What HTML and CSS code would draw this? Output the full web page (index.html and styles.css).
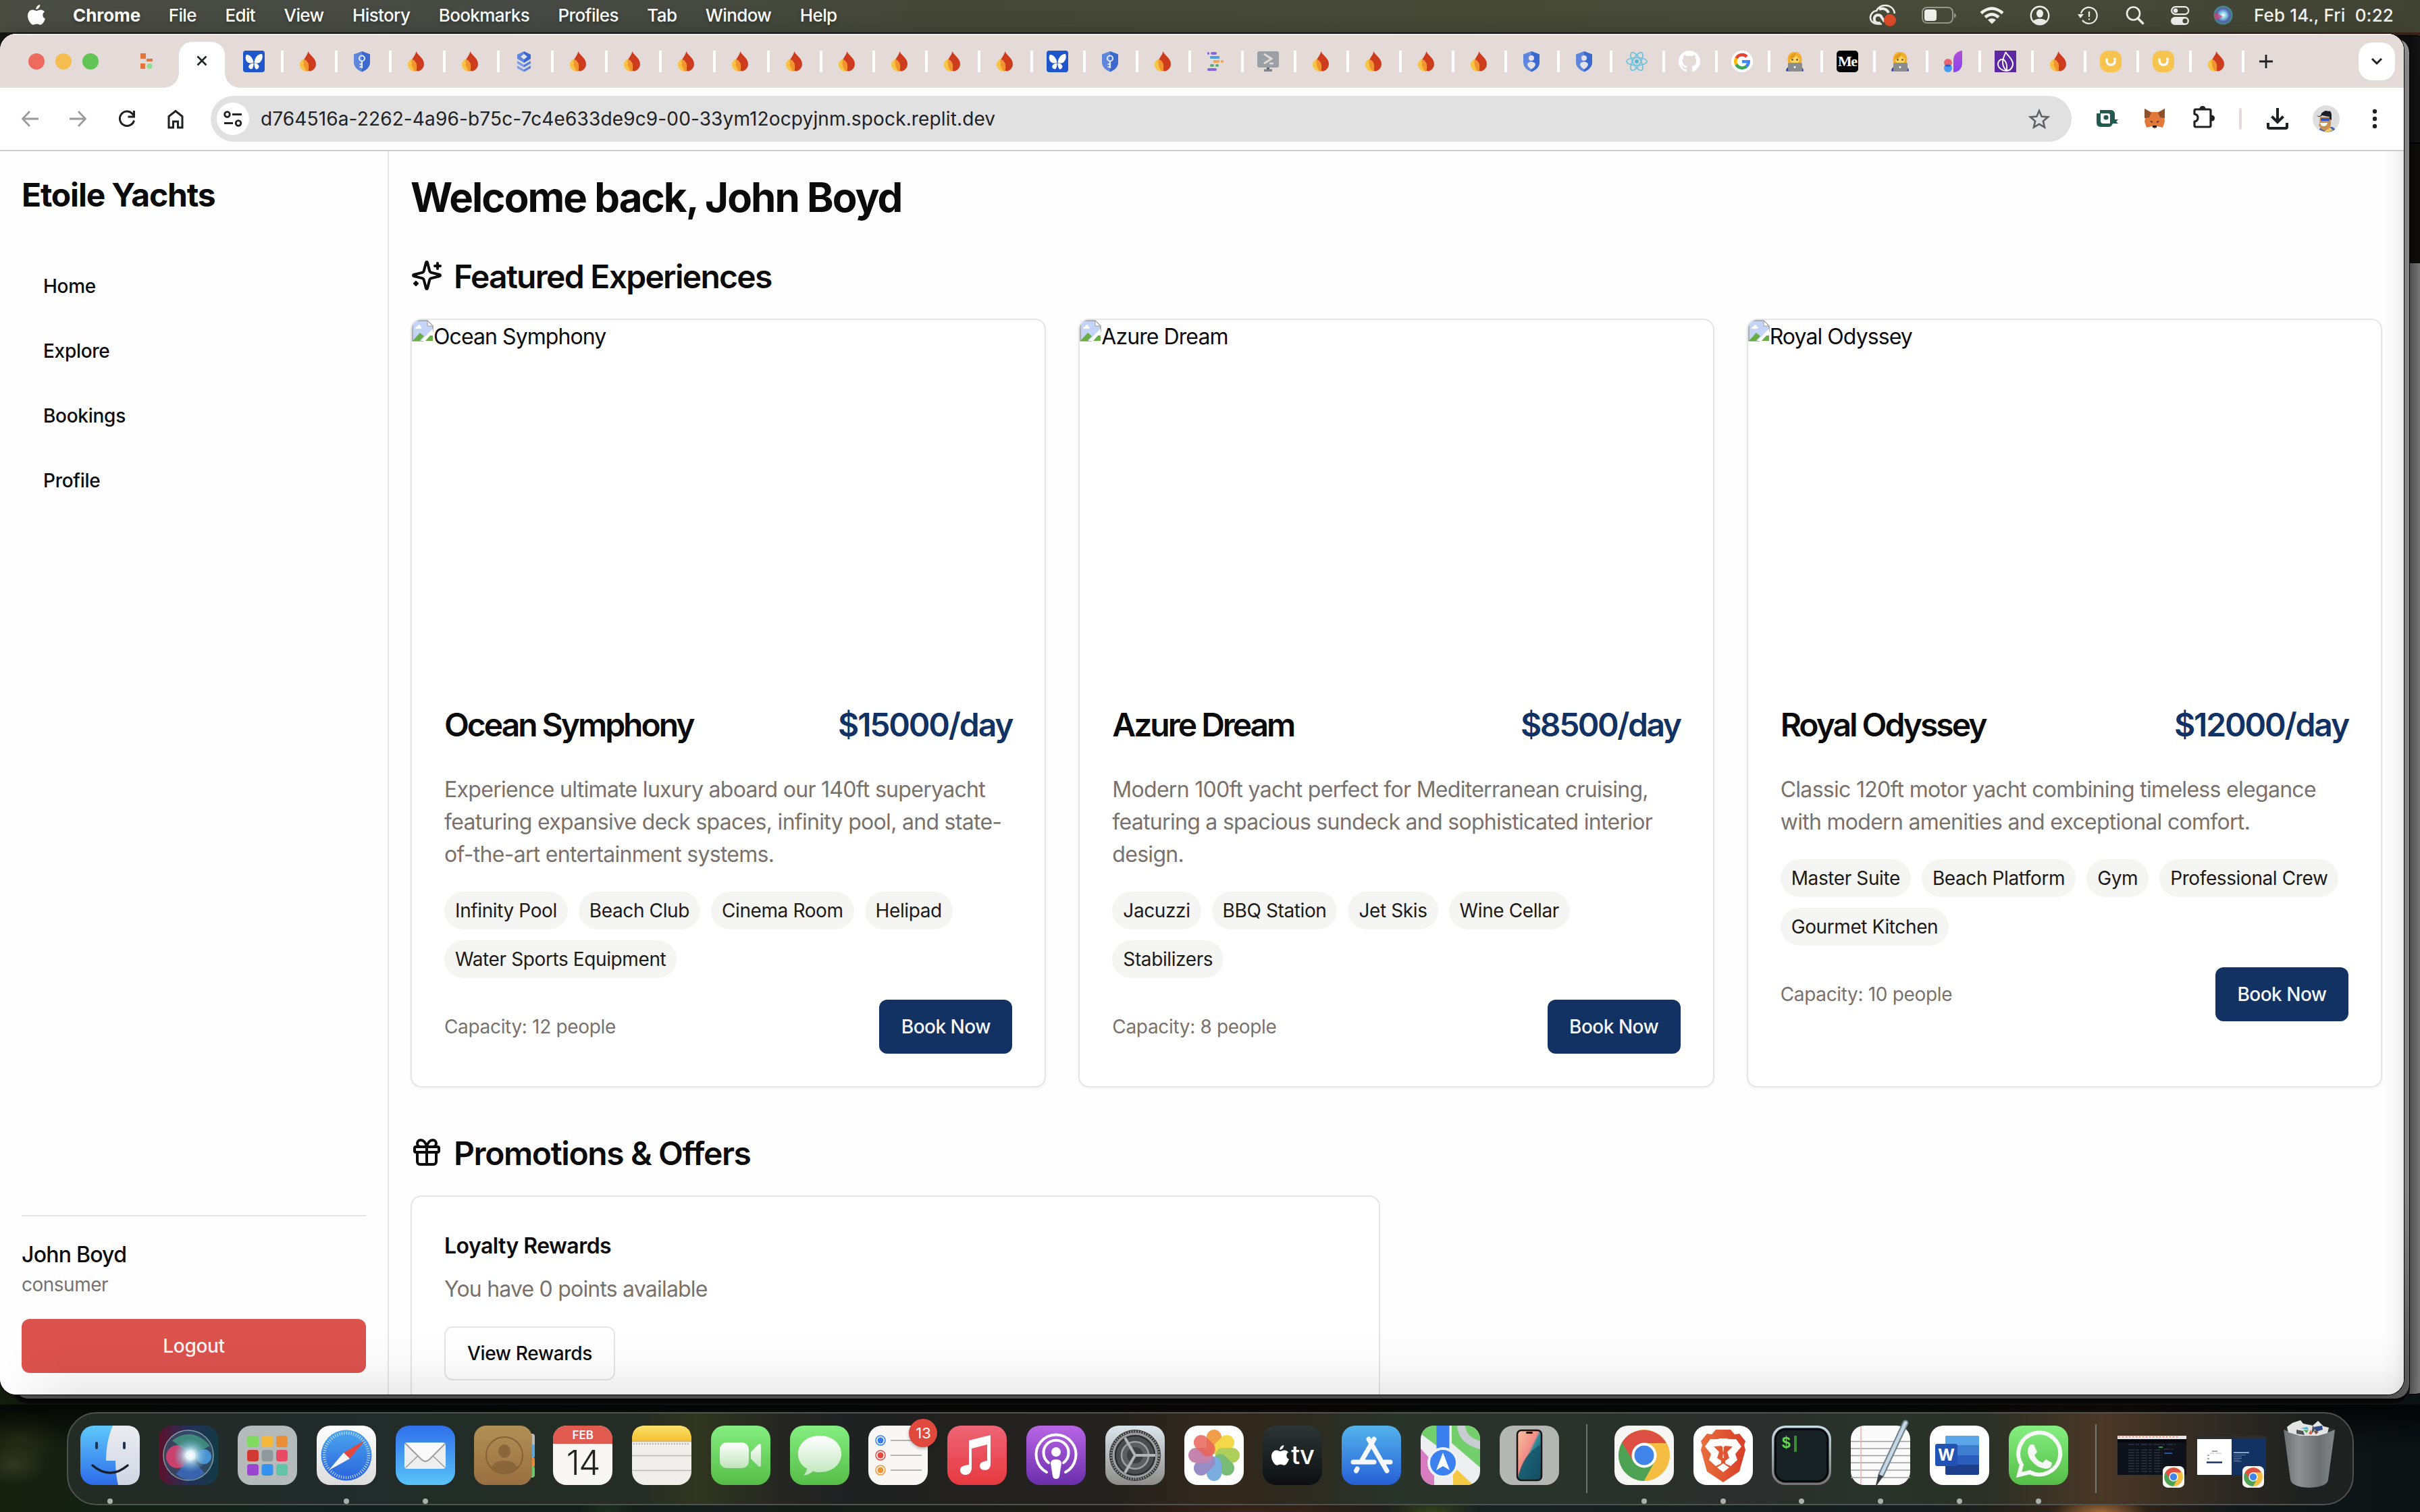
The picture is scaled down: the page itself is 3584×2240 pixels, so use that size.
FILE: index.html
```html
<!DOCTYPE html>
<html lang="en">
<head>
<meta charset="utf-8">
<title>Etoile Yachts</title>
<link rel="stylesheet" href="styles.css">
</head>
<body>
<svg class="defs" width="0" height="0">
  <defs>
    <linearGradient id="gFinder" x2="0" y2="1"><stop stop-color="#5ec8fa"/><stop offset="1" stop-color="#2c6bea"/></linearGradient>
    <linearGradient id="gFinder2" x2="0" y2="1"><stop stop-color="#ececf0"/><stop offset="1" stop-color="#cfd6e4"/></linearGradient>
    <radialGradient id="gSiri"><stop stop-color="#fff"/><stop offset=".25" stop-color="#e4f6fa"/><stop offset=".6" stop-color="#8fc4dc" stop-opacity=".6"/><stop offset="1" stop-color="#6fa8c8" stop-opacity="0"/></radialGradient>
    <linearGradient id="gSiriBg"><stop stop-color="#5d1029"/><stop offset=".5" stop-color="#24305c"/><stop offset="1" stop-color="#123a44"/></linearGradient>
    <linearGradient id="gWhite" x2="0" y2="1"><stop stop-color="#fff"/><stop offset="1" stop-color="#dcdcdc"/></linearGradient>
    <linearGradient id="gBlue" x2="0" y2="1"><stop stop-color="#4aa6ee"/><stop offset="1" stop-color="#2a63dc"/></linearGradient>
    <linearGradient id="gMail" x2="0" y2="1"><stop stop-color="#2f6fec"/><stop offset="1" stop-color="#59c4f8"/></linearGradient>
    <linearGradient id="gBrown" x2="0" y2="1"><stop stop-color="#b09055"/><stop offset="1" stop-color="#996f41"/></linearGradient>
    <linearGradient id="gYellow" x2="0" y2="1"><stop stop-color="#fbe06a"/><stop offset="1" stop-color="#f5c02f"/></linearGradient>
    <linearGradient id="gGreen" x2="0" y2="1"><stop stop-color="#84ef80"/><stop offset="1" stop-color="#56bd47"/></linearGradient>
    <linearGradient id="gCam" x2="0" y2="1"><stop stop-color="#fff"/><stop offset="1" stop-color="#bfe6bb"/></linearGradient>
    <linearGradient id="gRed" x2="0" y2="1"><stop stop-color="#ee6575"/><stop offset="1" stop-color="#e63940"/></linearGradient>
    <linearGradient id="gPurple" x2="0" y2="1"><stop stop-color="#b865e6"/><stop offset="1" stop-color="#6a2eab"/></linearGradient>
    <linearGradient id="gSet" x2="0" y2="1"><stop stop-color="#dbe6ec"/><stop offset="1" stop-color="#8d8c89"/></linearGradient>
    <linearGradient id="gStore" x2="0" y2="1"><stop stop-color="#53b4ec"/><stop offset="1" stop-color="#265fd6"/></linearGradient>
    <linearGradient id="gPhone" x2="1" y2="1"><stop stop-color="#f7c49c"/><stop offset=".45" stop-color="#f08a86"/><stop offset=".5" stop-color="#2f8c9c"/><stop offset="1" stop-color="#14364f"/></linearGradient>
    <linearGradient id="gBrave"><stop stop-color="#e8703d"/><stop offset="1" stop-color="#d83d28"/></linearGradient>
    <linearGradient id="gTerm" x2="0" y2="1"><stop stop-color="#c7dbe4"/><stop offset="1" stop-color="#74716f"/></linearGradient>
    <linearGradient id="gTrash"><stop stop-color="#6c7072"/><stop offset=".3" stop-color="#8e9193"/><stop offset=".7" stop-color="#6c6f71"/><stop offset="1" stop-color="#85888a"/></linearGradient>
    <linearGradient id="gPurple2" x2="0" y2="1"><stop stop-color="#b050d0"/><stop offset="1" stop-color="#8a43f6"/></linearGradient>
    <radialGradient id="gOrb"><stop stop-color="#fff"/><stop offset=".35" stop-color="#7fd0e6"/><stop offset=".7" stop-color="#5a5fb0"/><stop offset="1" stop-color="#3b9a80"/></radialGradient>
  </defs>
  <symbol id="flame" viewBox="0 0 32 32"><path fill="#cc3c1d" d="M16.4 1c1.2 4.5 11.6 10.400 11.600 18.500C28 25.500 24 30 18 30.500c-5-2-8.500-7-8.500-13C9.500 11 15.500 7.500 16.400 1z"/><path fill="#f7c445" d="M9 13C4.500 15 4 19 4 21c0 5.500 5 10.500 12 10 1-3 1.500-6 1-9-.5-5-4-9-8-9z"/><path fill="#f1932f" d="M9.700 13.200c3.800.8 6.800 4.300 7.300 8.800.3 3 0 6-1 8.700C12 29 9 23 9.700 13.200z"/></symbol>
  <symbol id="key" viewBox="0 0 32 32"><path fill="#5e86dc" d="M16 1 28 5.500V17c0 7-5 11.500-12 14.500C9 28.500 4 24 4 17V5.500z"/><path fill="#3b69cf" d="M16 1 28 5.500V17c0 7-5 11.500-12 14.500z"/><g fill="none" stroke="#dfe6f5" stroke-width="2.200"><circle cx="16" cy="11.500" r="4"/><path d="M16 15.500V26M16 20h-3.500M16 24h-3.500"/></g></symbol>
  <symbol id="person" viewBox="0 0 32 32"><path fill="#5e86dc" d="M16 1 28 5.500V17c0 7-5 11.500-12 14.500C9 28.500 4 24 4 17V5.500z"/><path fill="#3b69cf" d="M16 1 28 5.500V17c0 7-5 11.500-12 14.500z"/><circle cx="16" cy="11" r="4" fill="#e6e1e6"/><path fill="#e6e1e6" d="M10 21c0-6 12-6 12 0-1 3-3 5-6 6.500-3-1.500-5-3.500-6-6.500z"/></symbol>
  <symbol id="butterfly" viewBox="0 0 32 32"><rect width="32" height="32" rx="4" fill="#1f56cc"/><g fill="#fff"><path d="M15.500 17.500C14.500 11 10 5.500 5 6c-2.500 3-1.500 11.500 4.500 12.500 2.500.3 4.500 0 6-1z"/><path d="M16.500 17.500C17.500 10 22 4.500 28 5c2 4 0 12-5.500 13.500-2.500.4-4.500 0-6-1z"/><path d="M15.500 18.500c-4 .5-6.500 2-7.500 5 .5 3 3 4.500 5.500 3.500 1.500-2 2.200-5 2-8.500zM16.500 18.500c4 0 6 2 7 4.500 0 3-2 5-4.500 4.500-1.700-2-2.500-5-2.500-9z"/></g></symbol>
  <symbol id="layers" viewBox="0 0 32 32"><path fill="#5e86dc" d="M16 1 26 6v6l-10 6-10-6V6z"/><path fill="#3b69cf" d="M16 1 26 6v6l-10 6z"/><path fill="#e4e4ee" d="m16 5 5 4-5 4-5-4z"/><path fill="#7b9ce4" d="m6 15 10 6v4L6 19zM6 22l10 6v3.500L6 26z"/><path fill="#5580d9" d="m26 15-10 6v4l10-6zM26 22l-10 6v3.500L26 26z"/></symbol>
  <symbol id="stripes" viewBox="0 0 32 32"><rect x="4" y="2" width="3" height="4" rx="1.500" fill="#8466e0"/><rect x="9" y="2" width="9" height="4" rx="2" fill="#8466e0"/><rect x="8" y="8" width="14" height="4" rx="1" fill="#4aa3e0"/><rect x="13" y="14" width="9" height="4" rx="1" fill="#f2a44e"/><rect x="24" y="14" width="4" height="4" rx="1.500" fill="#f2a44e"/><rect x="8" y="20" width="6" height="4" rx="2" fill="#50b076"/><rect x="16" y="20" width="5" height="4" rx="2" fill="#50b076"/><rect x="4" y="26" width="14" height="4" rx="2" fill="#8466e0"/></symbol>
  <symbol id="shell" viewBox="0 0 32 32"><rect y="1" width="32" height="24" rx="3" fill="#9aa0a6"/><path fill="none" stroke="#e4dbd8" stroke-width="3" d="m10 5 11 7-11 7"/><path stroke="#e4dbd8" stroke-width="2.500" d="M18 19h6"/><path fill="#5f6368" d="M14 25h4v3h-4z"/><path fill="#80868b" d="M10 27.500h12V31H10z"/></symbol>
  <symbol id="react" viewBox="0 0 32 32"><g fill="none" stroke="#6dc3dc" stroke-width="1.800"><ellipse cx="16" cy="16" rx="15" ry="5.700"/><ellipse cx="16" cy="16" rx="15" ry="5.700" transform="rotate(60 16 16)"/><ellipse cx="16" cy="16" rx="15" ry="5.700" transform="rotate(120 16 16)"/></g><circle cx="16" cy="16" r="3" fill="#58b9d6"/></symbol>
  <symbol id="github" viewBox="0 0 16 16"><path fill="#fff" d="M8 0C3.580 0 0 3.580 0 8c0 3.540 2.290 6.530 5.470 7.590.4.070.55-.17.55-.38 0-.19-.01-.82-.01-1.490-2.010.37-2.530-.49-2.690-.94-.09-.23-.48-.94-.82-1.130-.28-.15-.68-.52-.01-.53.63-.01 1.080.58 1.230.82.72 1.210 1.870.87 2.330.66.070-.52.28-.87.51-1.070-1.780-.2-3.640-.89-3.640-3.950 0-.87.31-1.590.82-2.150-.08-.2-.36-1.020.08-2.120 0 0 .67-.21 2.200.82.64-.18 1.320-.27 2-.27s1.360.09 2 .27c1.530-1.040 2.200-.82 2.200-.82.44 1.100.16 1.920.08 2.120.51.56.82 1.270.82 2.150 0 3.070-1.870 3.750-3.650 3.950.29.25.54.73.54 1.480 0 1.070-.01 1.930-.01 2.200 0 .21.15.46.55.38A8.010 8.010 0 0 0 16 8c0-4.420-3.580-8-8-8z"/></symbol>
  <symbol id="google" viewBox="0 0 32 32"><circle cx="16" cy="16" r="16" fill="#fff"/><g fill="none" stroke-width="4.600"><path stroke="#ea4335" d="M7.500 11.500A9.700 9.700 0 0 1 23 9"/><path stroke="#fbbc05" d="M7.600 20.800a9.700 9.700 0 0 1 0-9.600"/><path stroke="#34a853" d="M22.500 23.200A9.700 9.700 0 0 1 7.500 20.700"/><path stroke="#4285f4" d="M16 16.200h9.700a9.700 9.700 0 0 1-3.300 7.100"/></g></symbol>
  <symbol id="coder" viewBox="0 0 32 32"><path fill="#2d47b5" d="M3 30.500c0-5 3-8 13-8s13 3 13 8z"/><path fill="#f0b030" d="M6 18C4 8 8 2 16 2s12 6 10 16z"/><path fill="#fcd65e" d="M9 12c4 0 7-2 9-5 1 3 3 4 5 5 0 5-3 8-7 8s-7-3-7-8z"/><path fill="#e59a24" d="M8 13C9 6 13 4 18 4c-1 5-5 8-10 9z"/><circle cx="12.500" cy="13.500" r="1.200" fill="#4a2c0c"/><circle cx="19.500" cy="13.500" r="1.200" fill="#4a2c0c"/><rect x="6" y="18" width="21" height="12" rx="1.500" fill="#8b8c90"/><circle cx="16" cy="24.500" r="1.400" fill="#fff"/></symbol>
  <symbol id="nomo" viewBox="0 0 32 32"><circle cx="9" cy="18" r="6" fill="#ec6474"/><circle cx="9" cy="26" r="6" fill="#459bf6"/><path fill="#2b5cc0" d="M4 22.500q5-4 10 0-5 2.500-10 0z"/><path fill="url(#gPurple2)" d="M17 32V14C17 6 22 1 30 0v18c0 8-5 14-13 14z"/></symbol>
  <symbol id="drop" viewBox="0 0 32 32"><rect width="32" height="32" fill="#5d279f"/><g fill="none" stroke="#fff" stroke-width="1.900"><path d="M16.500 2c1 4 10.500 10 10.500 17.500 0 6-4.500 10.500-10 10.500-5 0-12-4-12-10 0-4 3-7 6-7 4 0 8 5 7 16"/><path d="M16.500 2c-1 4-4.500 8-4.500 15 0 5 2 9 5 12"/></g></symbol>
  <symbol id="smile" viewBox="0 0 32 32"><rect width="32" height="32" rx="12" fill="#f7c44f"/><path d="M10 13v2c0 8 12 8 12 1" fill="none" stroke="#fff" stroke-width="3.400" stroke-linecap="round"/><circle cx="22" cy="12.500" r="2" fill="#fff"/></symbol>
  <symbol id="apple" viewBox="0 0 26 31"><path d="M18.300 0c.2 3.400-2.700 6.900-6 6.800C12 3.500 15 .3 18.300 0zM25 10.500c-3.700 2.300-3.600 8.300 1 10.200-1.500 4.300-4.200 9-7.300 9-2 0-2.700-1.200-5.200-1.200-2.500 0-3.400 1.200-5.300 1.200C4.600 29.700 0 22.500 0 16.500c0-5.600 3.600-9 7.200-9 2.500 0 4.200 1.400 6 1.400 1.700 0 3.200-1.500 6.300-1.500 2 0 4.200 1.100 5.500 3.100z"/></symbol>
  <symbol id="chrome" viewBox="0 0 88 88"><rect width="88" height="88" rx="20" fill="#f6f6f5"/><circle cx="44" cy="44" r="38" fill="#f5bd41"/><path fill="#4ea254" d="M11.100 25A38 38 0 0 0 44 82L60 53 44 44z"/><path fill="#de4f43" d="M11.100 25 28 53l16-27h32.900A38 38 0 0 0 11.100 25z"/><path fill="#f5bd41" d="M77 26H44l16 27-16 29A38 38 0 0 0 77 26z"/><circle cx="44" cy="44" r="18.500" fill="#fff"/><circle cx="44" cy="44" r="14.500" fill="#4285ea"/></symbol>
  <symbol id="broken" viewBox="0 0 32 32"><path d="M1 1h22l8 8v8L17 31H1z" fill="#c3d4f6" stroke="#9b9b9b" stroke-width="1.500"/><path d="M23 1v8h8z" fill="#fff" stroke="#9b9b9b"/><path d="M5 13c0-2 1-3 3-3 1-4 5-3 5 0 2 0 2 3 0 3z" fill="#fff"/><path d="m1 31 11-12 6 5-7 7zM20 31l7-8h4v8z" fill="#68ad45"/><path d="M13 31 31 13v6L19 31z" fill="#fff"/></symbol>
</svg>

<header class="menubar">
  <svg class="apple" width="26" height="31"><use href="#apple"/></svg>
  <nav class="menus"><b>Chrome</b><span>File</span><span>Edit</span><span>View</span><span>History</span><span>Bookmarks</span><span>Profiles</span><span>Tab</span><span>Window</span><span>Help</span></nav>
  <div class="status">
    <svg width="42" height="34" viewBox="0 0 42 34"><g fill="none" stroke="#efefec" stroke-width="2.600"><path d="M19 29.500H12C5 29 1.500 24 2 19s5-9 9-9C14 4 18 2 24 2c8 0 13 5 14 12"/><path stroke-width="4" d="M17 28c-8 1-10-3-9-8 2-5 9-5 11 0l4 6"/><path stroke-width="4" d="M15 8c6-3 12 0 14 5"/></g><circle cx="31" cy="24" r="9" fill="#dd4b26"/></svg>
    <svg width="52" height="26" viewBox="0 0 52 26"><rect x="1" y="1" width="45" height="23" rx="7" fill="none" stroke="#96978f" stroke-width="2"/><rect x="4" y="4" width="18" height="17" rx="4" fill="#efefec"/><path fill="#96978f" d="M48 9q6 4 0 8z"/></svg>
    <svg width="36" height="27" viewBox="0 0 36 27"><g fill="none" stroke="#efefec" stroke-width="4.500"><path d="M2 10.500q16-14 32 0"/><path d="M8 16.500q10-8.500 20 0"/></g><path fill="#efefec" d="M12 20.500q6-4.500 12 0l-6 6z"/></svg>
    <svg width="30" height="30" viewBox="0 0 30 30"><circle cx="15" cy="15" r="13.200" fill="none" stroke="#efefec" stroke-width="2.400"/><ellipse cx="15" cy="12" rx="5" ry="6" fill="#efefec"/><path fill="#efefec" d="M5 23.500c4-5 16-5 20 0-5 6-15 6-20 0z"/></svg>
    <svg width="31" height="30" viewBox="0 0 31 30"><path d="M5 12A12 12 0 1 1 7 22" fill="none" stroke="#efefec" stroke-width="2.200"/><path fill="#efefec" d="M0 13h9l-5 6z"/><path d="M17 9v8M17 19.500v2" stroke="#efefec" stroke-width="2.200"/></svg>
    <svg width="28" height="28" viewBox="0 0 28 28"><circle cx="11.500" cy="11" r="9.500" fill="none" stroke="#efefec" stroke-width="2.600"/><path d="m18 18 7.500 7.500" stroke="#efefec" stroke-width="3.600" stroke-linecap="round"/></svg>
    <svg width="28" height="28" viewBox="0 0 28 28"><rect x="1.200" y="1.200" width="25" height="11" rx="5.500" fill="none" stroke="#efefec" stroke-width="2.200"/><circle cx="7" cy="6.700" r="3.200" fill="#efefec"/><rect y="16" width="27" height="12" rx="6" fill="#efefec"/><circle cx="21" cy="22" r="3.600" fill="#454839"/></svg>
    <svg width="29" height="29" viewBox="0 0 29 29"><circle cx="14.500" cy="14.500" r="14" fill="url(#gOrb)"/><path fill="#d04070" opacity=".7" d="M1 12c6-3 9 4 13 4-4 4-9 6-12 4z"/></svg>
    <span class="clock">Feb 14., Fri&nbsp; 0:22</span>
  </div>
</header>

<div class="back back-far"></div>
<div class="back back-dark"></div>
<div class="back back-near"></div>

<main class="window">
  <div class="tabstrip">
    <div class="lights"><i class="red"></i><i class="amber"></i><i class="green"></i></div>
    <svg class="pinned" width="20" height="24" viewBox="0 0 20 24"><path fill="#e4743b" d="M1 0h8v8h10v4H10V8H1zM1 15h7v8H1z"/><circle cx="14.500" cy="19" r="4" fill="#8edc94"/></svg>
    <div class="active"><svg width="16" height="16" viewBox="0 0 16 16"><path d="m1.500 1.500 13 13m0-13-13 13" stroke="#202124" stroke-width="2.600"/></svg></div>
    <div class="tabs wide">
      <i><svg><use href="#butterfly"/></svg></i><i><svg><use href="#flame"/></svg></i><i><svg><use href="#key"/></svg></i><i><svg><use href="#flame"/></svg></i><i><svg><use href="#flame"/></svg></i><i><svg><use href="#layers"/></svg></i><i><svg><use href="#flame"/></svg></i><i><svg><use href="#flame"/></svg></i><i><svg><use href="#flame"/></svg></i><i><svg><use href="#flame"/></svg></i>
    </div>
    <div class="tabs">
      <i><svg><use href="#flame"/></svg></i><i><svg><use href="#flame"/></svg></i><i><svg><use href="#flame"/></svg></i><i><svg><use href="#flame"/></svg></i><i><svg><use href="#flame"/></svg></i><i><svg><use href="#butterfly"/></svg></i><i><svg><use href="#key"/></svg></i><i><svg><use href="#flame"/></svg></i><i><svg><use href="#stripes"/></svg></i><i><svg><use href="#shell"/></svg></i><i><svg><use href="#flame"/></svg></i><i><svg><use href="#flame"/></svg></i><i><svg><use href="#flame"/></svg></i><i><svg><use href="#flame"/></svg></i><i><svg><use href="#person"/></svg></i><i><svg><use href="#person"/></svg></i><i><svg><use href="#react"/></svg></i><i><svg><use href="#github"/></svg></i><i><svg><use href="#google"/></svg></i><i><svg><use href="#coder"/></svg></i><i><span class="medium">Me</span></i><i><svg><use href="#coder"/></svg></i><i><svg><use href="#nomo"/></svg></i><i><svg><use href="#drop"/></svg></i><i><svg><use href="#flame"/></svg></i><i><svg><use href="#smile"/></svg></i><i><svg><use href="#smile"/></svg></i><i><svg><use href="#flame"/></svg></i>
    </div>
    <svg class="plus" width="20" height="20" viewBox="0 0 20 20"><path d="M10 0v20M0 10h20" stroke="#202124" stroke-width="2.800"/></svg>
    <div class="tabsearch"><svg width="18" height="12" viewBox="0 0 18 12"><path d="m2 2 7 7 7-7" fill="none" stroke="#202124" stroke-width="3"/></svg></div>
  </div>

  <div class="toolbar">
    <svg class="nav-i" width="28" height="28" viewBox="0 0 28 28"><path d="M26 14H3M13 3 2.500 14 13 25" fill="none" stroke="#9b9c9e" stroke-width="2.800"/></svg>
    <svg class="nav-i" width="28" height="28" viewBox="0 0 28 28"><path d="M2 14h23M15 3l10.500 11L15 25" fill="none" stroke="#9b9c9e" stroke-width="2.800"/></svg>
    <svg class="nav-i" width="28" height="28" viewBox="0 0 28 28"><path d="M24.500 16.500A10.700 10.700 0 1 1 22 6.500l2 2.500" fill="none" stroke="#202124" stroke-width="3"/><path d="M24.500 2v9h-9" fill="none" stroke="#202124" stroke-width="3"/></svg>
    <svg class="nav-i" width="28" height="30" viewBox="0 0 28 30"><path d="M4 28V11.500L14 3.500l10 8V28h-6.500v-9h-7v9z" fill="none" stroke="#202124" stroke-width="3"/></svg>
    <div class="omnibox">
      <div class="site"><svg width="28" height="24" viewBox="0 0 28 24"><g fill="none" stroke="#202124" stroke-width="2.800"><circle cx="5.500" cy="5.500" r="3.800"/><path d="M13 5.500h14M1 18.500h13"/><circle cx="22" cy="18.500" r="3.800"/></g></svg></div>
      <span class="url">d764516a-2262-4a96-b75c-7c4e633de9c9-00-33ym12ocpyjnm.spock.replit.dev</span>
      <svg class="star" width="32" height="30" viewBox="0 0 32 30"><path d="m16 3 3.600 8.600 9.300.8-7 6.100 2.100 9.100-8-4.800-8 4.800 2.100-9.100-7-6.100 9.300-.8z" fill="none" stroke="#5f6165" stroke-width="2.600"/></svg>
    </div>
    <svg class="e1" width="32" height="26" viewBox="0 0 32 26"><path fill="#225a50" fill-rule="evenodd" d="M0 5h5V0h16c4 0 6 3 6 6v8h5l-3 3 3 3h-8c-1 3-3 5-6 5H6c-4 0-6-3-6-6zm6 0v11c0 3 2 4 4 4h10V8c0-2-1-3-3-3z"/><circle cx="14" cy="11" r="3.600" fill="#225a50"/></svg>
    <svg class="e2" width="34" height="30" viewBox="0 0 34 30"><path fill="#e2793a" d="M2 0l10 5h10L32 0l-1 10 1 9-3 9-8-2-4 4-4-4-8 2-3-9 2-9z"/><path fill="#8c5230" d="M2 0l10 6-3 7-7 1zM32 0 22 6l3 7 7 1z"/><path fill="#2a1c16" d="M14 25h6v3h-6zM10 18l4 1-1 2zM24 18l-4 1 1 2z"/></svg>
    <svg class="e3" width="34" height="34" viewBox="0 0 34 34"><path d="M3 12V7q0-2 2-2h20q2 0 2 2v22q0 2-2 2H5q-2 0-2-2v-6q5-.5 5-5.500t-5-5.500z" fill="none" stroke="#202124" stroke-width="3.200" stroke-linejoin="round"/><path d="M10.500 4.500q0-4.500 4.500-4.500t4.500 4.500zM28 13.500q5 0 5 4.500t-5 4.500z" fill="#202124"/></svg>
    <i class="vsep"></i>
    <svg class="e4" width="32" height="32" viewBox="0 0 32 32"><path d="M16 0v20M7.500 12.500 16 21l8.500-8.500M2 22v6q0 2 2 2h24q2 0 2-2v-6" fill="none" stroke="#202124" stroke-width="4"/></svg>
    <svg class="e5" width="40" height="40" viewBox="0 0 40 40"><circle cx="20" cy="20" r="20" fill="#dedede"/><path fill="#3f62c9" d="M10 36q1-4 5-4h14q4 2 4 4-10 7-23 0z"/><path fill="#f3cd5c" d="M17 39l8-7 5 5q-6 3-13 2z"/><path fill="#c89150" d="M11 17h16v11q-1 8-9 9-5 0-7-5-3-2-1-5z"/><path fill="#1c1e27" d="M6 15q6 3 7-3 6-6 10-3 4-2 5 5v8l-3-2v-3q-6-1-11-2-5 4-8 0z"/><path fill="#2d54cf" d="M12 19h13v4H12z"/><path fill="#fff" d="M11 26h11q-1 5-6 5-4 0-5-5z"/></svg>
    <svg class="e6" width="8" height="30" viewBox="0 0 8 30"><g fill="#202124"><circle cx="4" cy="4" r="3.200"/><circle cx="4" cy="15" r="3.200"/><circle cx="4" cy="26" r="3.200"/></g></svg>
  </div>

  <div class="page">
    <aside class="sidebar">
      <h1 class="brand">Etoile Yachts</h1>
      <nav class="side-nav"><a>Home</a><a>Explore</a><a>Bookings</a><a>Profile</a></nav>
      <div class="user">
        <p class="user-name">John Boyd</p>
        <p class="user-role">consumer</p>
        <button class="btn danger">Logout</button>
      </div>
    </aside>
    <section class="content">
      <h1 class="welcome">Welcome back, John Boyd</h1>
      <h2 class="section-title"><svg width="48" height="48" viewBox="0 0 24 24"><path d="M9.937 15.500A2 2 0 0 0 8.500 14.063l-6.135-1.582a.5.5 0 0 1 0-.962L8.500 9.936A2 2 0 0 0 9.937 8.500l1.582-6.135a.5.5 0 0 1 .963 0L14.063 8.500A2 2 0 0 0 15.500 9.937l6.135 1.581a.5.5 0 0 1 0 .964L15.500 14.063a2 2 0 0 0-1.437 1.437l-1.582 6.135a.5.5 0 0 1-.963 0zM20 3v4M22 5h-4M4 17v2M5 18H3"/></svg><span>Featured Experiences</span></h2>
      <div class="cards">
        <article class="card">
          <div class="photo"><svg width="32" height="32"><use href="#broken"/></svg><span>Ocean Symphony</span></div>
          <div class="body">
            <div class="head"><h3>Ocean Symphony</h3><strong>$15000/day</strong></div>
            <p class="desc">Experience ultimate luxury aboard our 140ft superyacht<br>featuring expansive deck spaces, infinity pool, and state-<br>of-the-art entertainment systems.</p>
            <div class="tags"><span>Infinity Pool</span><span>Beach Club</span><span>Cinema Room</span><span>Helipad</span><span>Water Sports Equipment</span></div>
            <div class="foot"><span>Capacity: 12 people</span><button class="btn primary">Book Now</button></div>
          </div>
        </article>
        <article class="card">
          <div class="photo"><svg width="32" height="32"><use href="#broken"/></svg><span>Azure Dream</span></div>
          <div class="body">
            <div class="head"><h3>Azure Dream</h3><strong class="short">$8500/day</strong></div>
            <p class="desc">Modern 100ft yacht perfect for Mediterranean cruising,<br>featuring a spacious sundeck and sophisticated interior<br>design.</p>
            <div class="tags"><span>Jacuzzi</span><span>BBQ Station</span><span>Jet Skis</span><span>Wine Cellar</span><span>Stabilizers</span></div>
            <div class="foot"><span>Capacity: 8 people</span><button class="btn primary">Book Now</button></div>
          </div>
        </article>
        <article class="card">
          <div class="photo"><svg width="32" height="32"><use href="#broken"/></svg><span>Royal Odyssey</span></div>
          <div class="body">
            <div class="head"><h3>Royal Odyssey</h3><strong>$12000/day</strong></div>
            <p class="desc">Classic 120ft motor yacht combining timeless elegance<br>with modern amenities and exceptional comfort.</p>
            <div class="tags"><span>Master Suite</span><span>Beach Platform</span><span>Gym</span><span>Professional Crew</span><span>Gourmet Kitchen</span></div>
            <div class="foot"><span>Capacity: 10 people</span><button class="btn primary">Book Now</button></div>
          </div>
        </article>
      </div>
      <h2 class="section-title promo-title"><svg width="48" height="48" viewBox="0 0 24 24"><rect x="3" y="8" width="18" height="4" rx="1"/><path d="M12 8v13M19 12v7a2 2 0 0 1-2 2H7a2 2 0 0 1-2-2v-7M7.500 8a2.500 2.500 0 0 1 0-5A4.800 8 0 0 1 12 8a4.800 8 0 0 1 4.500-5 2.500 2.500 0 0 1 0 5"/></svg><span>Promotions &amp; Offers</span></h2>
      <div class="promo">
        <h4>Loyalty Rewards</h4>
        <p>You have 0 points available</p>
        <button class="btn outline">View Rewards</button>
      </div>
    </section>
  </div>
</main>

<footer class="dock">
  <div class="app run"><svg viewBox="0 0 88 88"><rect width="88" height="88" rx="20" fill="url(#gFinder)"/><path fill="url(#gFinder2)" d="M48 0h20q20 0 20 20v48q0 20-20 20H56c-3-12-4-24-4-36H38C38 32 42 14 48 0z"/><path d="M24 26v7M65 26v7" stroke="#1d3350" stroke-width="4" stroke-linecap="round"/><path d="M18 59q26 22 52 0" fill="none" stroke="#17202c" stroke-width="3.500" stroke-linecap="round"/></svg></div>
  <div class="app"><svg viewBox="0 0 88 88"><rect width="88" height="88" rx="20" fill="url(#gSiriBg)"/><circle cx="44" cy="44" r="37" fill="#35506a" opacity=".75" stroke="#9cc4b8" stroke-width="1.500"/><circle cx="28" cy="46" r="17" fill="#d8436f" opacity=".9"/><circle cx="67" cy="46" r="11" fill="#4aa0ea" opacity=".85"/><path d="M20 22Q50 0 76 30L48 44z" fill="#4ab48c" opacity=".6"/><path d="M26 72l20-26 22 24q-20 20-42 2z" fill="#3c6cc8" opacity=".75"/><circle cx="47" cy="44" r="25" fill="url(#gSiri)"/></svg></div>
  <div class="app"><svg viewBox="0 0 88 88"><rect width="88" height="88" rx="20" fill="#b5babb"/><rect x="14" y="15" width="17" height="17" rx="4" fill="#7edb5e"/><rect x="35.500" y="15" width="17" height="17" rx="4" fill="#f5b83d"/><rect x="57" y="15" width="17" height="17" rx="4" fill="#ec8e36"/><rect x="14" y="36" width="17" height="17" rx="4" fill="#d03a30"/><rect x="35.500" y="36" width="17" height="17" rx="4" fill="#8f989d"/><rect x="57" y="36" width="17" height="17" rx="4" fill="#ea4a62"/><rect x="14" y="57" width="17" height="17" rx="4" fill="#9a45cd"/><rect x="35.500" y="57" width="17" height="17" rx="4" fill="#3391ef"/><rect x="57" y="57" width="17" height="17" rx="4" fill="#62c4a6"/></svg></div>
  <div class="app run"><svg viewBox="0 0 88 88"><rect width="88" height="88" rx="20" fill="url(#gWhite)"/><circle cx="44" cy="44" r="37.500" fill="url(#gBlue)"/><circle cx="44" cy="44" r="33" fill="none" stroke="#d5e8fb" stroke-width="4.500" stroke-dasharray="1 2.450"/><path fill="#e2483d" d="M71 22 49 49l-9-9z"/><path fill="#f4f4f4" d="M18 66l22-26 9 9z"/></svg></div>
  <div class="app run"><svg viewBox="0 0 88 88"><rect width="88" height="88" rx="20" fill="url(#gMail)"/><rect x="13" y="25" width="61" height="39" rx="4" fill="#eeeeee"/><path d="m15 62 22-21M73 62 51 41" stroke="#9b9b9b" stroke-width="1.500"/><path d="m14 26 24 24q6 6 12 0l24-24" fill="#fafafa" stroke="#9b9b9b" stroke-width="1.800"/></svg></div>
  <div class="app"><svg viewBox="0 0 88 88"><rect x="76" y="12" width="14" height="20" rx="4" fill="#b9bab5"/><rect x="76" y="28" width="14" height="20" rx="3" fill="#58a8dd"/><rect x="76" y="47" width="14" height="15" rx="3" fill="#e58a35"/><rect x="76" y="60" width="14" height="17" rx="4" fill="#6cc66a"/><rect width="86" height="88" rx="18" fill="url(#gBrown)"/><circle cx="45" cy="44" r="27" fill="none" stroke="#856234" stroke-width="2"/><ellipse cx="45" cy="38" rx="9" ry="10" fill="#8a673a"/><path fill="#8a673a" d="M26 62q4-10 19-10t19 10q-19 18-38 0z"/></svg></div>
  <div class="app cal"><b>FEB</b><span>14</span></div>
  <div class="app"><svg viewBox="0 0 88 88"><rect width="88" height="88" rx="20" fill="#f0eeeb"/><path fill="url(#gYellow)" d="M0 23v-3Q0 0 20 0h48q20 0 20 20v3z"/><path stroke="#b9b8b6" stroke-width="1.500" d="M0 23.500h88M0 44.500h88M0 66.500h88"/><path stroke="#9b9a98" stroke-width="2" stroke-dasharray="1.500 2.500" d="M2 27h84"/></svg></div>
  <div class="app"><svg viewBox="0 0 88 88"><rect width="88" height="88" rx="20" fill="url(#gGreen)"/><rect x="13" y="25" width="43" height="38" rx="10" fill="url(#gCam)"/><path fill="url(#gCam)" d="m59 39 11-11q4-3 4 2v28q0 5-4 2L59 49z"/></svg></div>
  <div class="app"><svg viewBox="0 0 88 88"><rect width="88" height="88" rx="20" fill="url(#gGreen)"/><path fill="url(#gCam)" d="M44 15c18 0 32 11 32 27S62 69 44 69c-4 0-7-.5-10-1.500-4 4-9 6-14 6 3-3 5-7 5-10C16 59 12 51 12 42c0-16 14-27 32-27z"/></svg></div>
  <div class="app"><svg viewBox="0 0 88 88"><rect width="88" height="88" rx="20" fill="#f8f7f5"/><g fill="none" stroke-width="1.500"><circle cx="18" cy="22" r="7" stroke="#2f7df0"/><circle cx="18" cy="44" r="7" stroke="#e2483d"/><circle cx="18" cy="66" r="7" stroke="#ec9736"/></g><circle cx="18" cy="22" r="4.500" fill="#2f7df0"/><circle cx="18" cy="44" r="4.500" fill="#e2483d"/><circle cx="18" cy="66" r="4.500" fill="#ec9736"/><path stroke="#b4b4b6" stroke-width="2" d="M33 22h46M33 44h46M33 66h46"/></svg><em class="badge">13</em></div>
  <div class="app"><svg viewBox="0 0 88 88"><rect width="88" height="88" rx="20" fill="url(#gRed)"/><path fill="#fff" d="M32 22l32-8v43c0 5-3 9-8 9s-8-3-8-6c0-5 4-7 11-8V28l-23 6v29c0 6-4 10-9 10s-8-3-8-7c0-5 4-7 13-8z"/></svg></div>
  <div class="app"><svg viewBox="0 0 88 88"><rect width="88" height="88" rx="20" fill="url(#gPurple)"/><g fill="none" stroke="#fff" stroke-width="4" stroke-linecap="round"><path d="M30 69a29.500 29.500 0 1 1 28 0"/><path d="M33 55a18.500 18.500 0 1 1 22 0"/></g><circle cx="44" cy="39" r="7" fill="#fff"/><path fill="#fff" d="M36 56q0-6 8-6t8 6l-3 19q-1 4-5 4t-5-4z"/></svg></div>
  <div class="app"><svg viewBox="0 0 88 88"><rect width="88" height="88" rx="20" fill="url(#gSet)"/><circle cx="44" cy="44" r="38" fill="#2c2d2e"/><circle cx="44" cy="44" r="32" fill="none" stroke="#9c9d9d" stroke-width="3.500"/><circle cx="44" cy="44" r="35.500" fill="none" stroke="#8f9090" stroke-width="3" stroke-dasharray="2 1.800"/><circle cx="44" cy="44" r="28" fill="#4a4c4d"/><circle cx="44" cy="44" r="20" fill="#5c5e5f" stroke="#9fa0a0" stroke-width="2.500"/><circle cx="44" cy="44" r="12" fill="#3d3f40"/><path d="M44 44h30M44 44 29 18M44 44 29 70" stroke="#b4b5b5" stroke-width="4"/></svg></div>
  <div class="app"><svg viewBox="0 0 88 88"><rect width="88" height="88" rx="20" fill="#fdfdfd"/><g opacity=".92"><rect x="33" y="6" width="22" height="36" rx="11" fill="#f0953a"/><rect x="33" y="6" width="22" height="36" rx="11" fill="#f3d73a" transform="rotate(45 44 44)"/><rect x="33" y="6" width="22" height="36" rx="11" fill="#a9cc4e" transform="rotate(90 44 44)"/><rect x="33" y="6" width="22" height="36" rx="11" fill="#6cb76c" transform="rotate(135 44 44)"/><rect x="33" y="6" width="22" height="36" rx="11" fill="#6fa8dc" transform="rotate(180 44 44)"/><rect x="33" y="6" width="22" height="36" rx="11" fill="#8f83c2" transform="rotate(225 44 44)"/><rect x="33" y="6" width="22" height="36" rx="11" fill="#c07aa8" transform="rotate(270 44 44)"/><rect x="33" y="6" width="22" height="36" rx="11" fill="#e8574a" opacity=".85" transform="rotate(315 44 44)"/></g></svg></div>
  <div class="app tv"><svg width="26" height="31"><use href="#apple"/></svg><span>tv</span></div>
  <div class="app"><svg viewBox="0 0 88 88"><rect width="88" height="88" rx="20" fill="url(#gStore)"/><g stroke="#f5f8fd" stroke-width="7" stroke-linecap="round"><path d="M48 20 29 53M40 20l27 47M17 54h31M60 54h12M23 64l-1.500 3"/></g></svg></div>
  <div class="app"><svg viewBox="0 0 88 88"><clipPath id="mapClip"><rect width="88" height="88" rx="20"/></clipPath><g clip-path="url(#mapClip)"><rect width="88" height="88" fill="#eceef0"/><path fill="#72cf6b" d="M0 0h24v30L0 12zM46 0h42v62L46 26z"/><path fill="#d87cc1" d="M0 34l20 22v32H0z"/><path fill="#f6c944" d="M48 60l30 28H48z"/><path d="M60-6q-2 30 34 36" fill="none" stroke="#c9ccd1" stroke-width="12"/><path stroke="#3b7ef0" stroke-width="19" d="M33 0v40"/></g><circle cx="33" cy="55" r="21" fill="#3b82f0" stroke="#f0f2f5" stroke-width="4"/><path fill="#fff" d="m33 40 10 26-10-6-10 6z"/></svg></div>
  <div class="app"><svg viewBox="0 0 88 88"><rect width="88" height="88" rx="20" fill="#b4b6b4"/><rect x="26" y="7" width="36" height="74" rx="6" fill="url(#gPhone)" stroke="#151515" stroke-width="2.500"/><path fill="#155268" opacity=".8" d="M28 74q6-30 32-46v48q0 4-4 4H32q-4 0-4-6z"/><rect x="39" y="9" width="10" height="3" rx="1.500" fill="#111"/></svg></div>
  <i class="divider"></i>
  <div class="app run"><svg><use href="#chrome"/></svg></div>
  <div class="app run"><svg viewBox="0 0 88 88"><rect width="88" height="88" rx="20" fill="#fff"/><path fill="url(#gBrave)" d="M33 6h22l6 7 7-1 9 11-2 6 2 7-9 32-24 16-24-16-9-32 2-7-2-6 9-11 7 1z"/><path fill="#fff" d="M25 20q9 1 14-1h10q5 2 14 1l8 11-9 11 3 9-10 9-8-4v-4l6-4-3-9 8-8-11-1-4 3 2 15h-2l2-15-1-1-1 1 2 15h-2l2-15-4-3-11 1 8 8-3 9 6 4v4l-8 4-10-9 3-9-9-11zM44 56l9 6-9 7-9-7z"/></svg></div>
  <div class="app run"><svg viewBox="0 0 88 88"><rect width="88" height="88" rx="20" fill="url(#gTerm)"/><rect x="3.500" y="3.500" width="81" height="81" rx="17" fill="#06090b"/><rect x="7" y="7" width="74" height="74" rx="13" fill="#172023"/></svg><span class="prompt">$<i></i></span></div>
  <div class="app run"><svg viewBox="0 0 88 88"><rect width="88" height="88" rx="20" fill="#fafafa"/><path stroke="#9c9c9c" stroke-width="1.500" d="M0 23.500h88M0 34h88M0 44.500h88M0 55h88M0 66h88M0 77h88"/><path stroke="#efb1b1" stroke-width="1.500" d="M15 1v86"/><path stroke="#6f7f8c" stroke-width="9" stroke-linecap="round" d="M81-4 45 73"/><path stroke="#c5d8e6" stroke-width="5" stroke-linecap="round" d="M81-4 45 73"/><path fill="#3a3d42" d="M41 72l7 3-12 17z"/></svg></div>
  <div class="app run"><svg viewBox="0 0 88 88"><rect width="88" height="88" rx="20" fill="#fff"/><rect x="23" y="15" width="50" height="58" rx="3" fill="#2b5dbd"/><path fill="#5aa4e8" d="M23 29V18q0-3 3-3h44q3 0 3 3v11z"/><path fill="#3f7dd0" d="M23 29h50v15H23z"/><path fill="#1e3f8c" d="M23 58h50v12q0 3-3 3H26q-3 0-3-3z"/><rect x="8" y="27" width="33" height="33" rx="3" fill="#2253b4"/></svg><span class="word">W</span></div>
  <div class="app run"><svg viewBox="0 0 88 88"><rect width="88" height="88" rx="20" fill="url(#gGreen)"/><path d="M15 73l4-15a31 31 0 1 1 12 11z" fill="none" stroke="#f6f8f6" stroke-width="6"/><path fill="#f6f8f6" d="M32 28h5l5 11-4 5q4 8 12 11l5-5 9 5q0 9-10 9-14-2-22-14-8-13 0-22z"/></svg></div>
  <i class="divider"></i>
  <div class="thumb github-thumb"><svg viewBox="0 0 102 58"><rect width="102" height="58" fill="#0e131b"/><rect width="102" height="5" fill="#e8e6e5"/><path stroke="#d9664d" stroke-width="1" stroke-dasharray="2 3" d="M2 1.500h90"/><path stroke="#06080d" stroke-width="4" d="M0 8h102"/><path stroke="#3c444f" stroke-width="1.200" stroke-dasharray="9 2 5 3" d="M16 13h70M16 21h50M16 25h50M16 29h50M16 33h50M16 37h50M16 41h50M16 45h50M16 49h50M16 53h50M68 20h14"/><path stroke="#2f9a45" stroke-width="2" d="M61 17h6"/><path stroke="#2753a8" stroke-width="2" d="M69 26h12"/></svg><svg class="mini"><use href="#chrome"/></svg></div>
  <div class="thumb login-thumb"><svg viewBox="0 0 102 58"><rect width="102" height="58" fill="#fff"/><rect x="51" width="51" height="58" fill="#113262"/><rect width="102" height="5" fill="#2b2d30"/><path stroke="#555" stroke-width="1.200" d="M22 23h8M15 29h3M15 34h3"/><path stroke="#bbb" stroke-width="1" d="M19 26h6M27 26h9"/><path stroke="#113262" stroke-width="2.500" d="M14 39.500h23"/><path stroke="#9fb2cd" stroke-width="1.800" d="M54 25h23"/><path stroke="#5b78a2" stroke-width="1" d="M54 28.500h18M54 31h12M54 33.500h12M54 36h9M54 38h12"/></svg><svg class="mini"><use href="#chrome"/></svg></div>
  <div class="trash"><svg width="78" height="100" viewBox="0 0 78 100"><path fill="url(#gTrash)" d="M1 14q38 16 76 0L67 88q-1 11-28 12-26-1-28-12z"/><path fill="#3a3c3d" opacity=".55" d="M1 14Q39-2 77 14 39 30 1 14z"/><path fill="#e4e4e4" d="M6 10 14 4l12-4 4 5 14 3 8-7 8 8 8 2-2 8-14 4-26 0-18-5z"/><path fill="#4f5357" d="M20 14l10 2 2 6-12-2zM44 8l4 5-6 8z"/><path fill="#49b1e0" d="M26 12l10-2 2 4z"/><path fill="#48b548" d="M30 14l8 1-3 4z"/><path fill="#d9533c" d="M38 20l4-6v7z"/><path fill="#2f4d8a" d="M46 10l12-2 1 6-10 3z"/><path fill="#7a4a36" d="M45 15l8 2-4 4z"/></svg></div>
</footer>
</body>
</html>
```
FILE: styles.css
```css
* { box-sizing: border-box; margin: 0; }
body {
  width: 3584px; height: 2240px; overflow: hidden; position: relative;
  font-family: Inter, "Liberation Sans", sans-serif; color: #0b0b0b;
  background:
    linear-gradient(90deg, #14160f, #1a1c1c 30%, #17191b 60%, #3b2417 98%) 0 0 / 100% 100px no-repeat,
    linear-gradient(180deg, transparent 2080px, rgba(0,0,0,.75) 2082px, rgba(0,0,0,0) 2150px),
    radial-gradient(60px 40px at 30px 2130px, #2c331a, transparent),
    radial-gradient(50px 30px at 20px 2170px, #343722, transparent),
    radial-gradient(40px 20px at 900px 2238px, #1c3020, transparent),
    radial-gradient(70px 20px at 2120px 2238px, #34401b, transparent),
    radial-gradient(70px 20px at 3110px 2240px, #a06a3c, transparent),
    radial-gradient(200px 20px at 1850px 2240px, #38251a, transparent),
    linear-gradient(90deg, #16200f 0, #11211d 12%, #141c18 33%, #1c1a17 45%, #2a1d15 53%, #182220 60%, #141d1c 80%, #3a2818 87%, #141818 92%, #0b1315 100%);
  background-color: #101512;
}
.defs { position: absolute; }
svg { display: block; flex: none; }

.menubar {
  height: 48px; display: flex; align-items: center; justify-content: space-between; padding: 0 39px 3px 41px;
  background: linear-gradient(90deg, #4a4c42 0, #474a44 22%, #444738 38%, #464936 60%, #474a39 80%, #414334 100%);
  color: #fff; font-size: 26px; font-weight: 500; letter-spacing: -.024em;
}
.apple { fill: #fff; margin-right: 41px; }
.menus { display: flex; gap: 42.500px; flex: 1; text-shadow: 0 2px 5px rgba(0,0,0,.35); }
.menus b { letter-spacing: -.002em; margin-right: -1px; }
.status { display: flex; align-items: center; }
.status svg { margin-right: 36px; }
.status svg:nth-child(2) { margin-right: 34px; }
.status svg:nth-child(3) { margin-right: 38px; }
.status svg:nth-child(4) { margin-right: 41px; }
.status svg:nth-child(5) { margin-right: 40px; }
.status svg:nth-child(6) { margin-right: 39px; }
.status svg:nth-child(7) { margin-right: 35px; }
.status svg:nth-child(8) { margin-right: 31px; }
.clock { letter-spacing: .006em; color: #f3f3f1; white-space: pre; }

.back { position: absolute; }
.back-far { left: 3000px; top: 52px; width: 600px; height: 2014px; border-radius: 24px; border: 1px solid #000;
  background: linear-gradient(90deg, rgba(0,0,0,.45) 568px, transparent 600px), linear-gradient(#191a19 0 158px, #000 158px 160px, #12110d 160px 337px, #a4a4a4 337px); }
.back-dark { left: 18px; top: 100px; width: 3551px; height: 1981px; border-radius: 24px; background: #080808; border: 2px solid #151515; }
.back-near { left: 20px; top: 56px; width: 3549px; height: 2017px; border-radius: 22px; border: 1px solid #000;
  background: linear-gradient(#9f9f9f 85%, #666 99%); }
.window { position: absolute; left: 0; top: 50px; width: 3560px; height: 2016px; border-radius: 24px; overflow: hidden; background: #fff; box-shadow: 0 0 0 1px #000, 0 12px 40px rgba(0,0,0,.4); display: flex; flex-direction: column; }

.tabstrip { height: 80px; background: #e4dbd8; border-top: 2px solid #efe9e7; display: flex; align-items: center; padding: 0 13px 0 42px; position: relative; flex: none; }
.lights { display: flex; gap: 16px; width: 165px; }
.lights i { width: 24px; height: 24px; border-radius: 50%; }
.red { background: #ee6a5f; } .amber { background: #f5bd4f; } .green { background: #61c454; }
.active { width: 68px; height: 68px; margin: 10px 7px 0 38px; background: #fff; border-radius: 20px 20px 0 0; display: flex; align-items: center; justify-content: center; padding-bottom: 12px; position: relative; }
.active::before, .active::after { content: ""; position: absolute; bottom: 0; width: 22px; height: 22px; }
.active::before { left: -22px; background: radial-gradient(circle at 0 0, transparent 21.500px, #fff 22px); }
.active::after { right: -22px; background: radial-gradient(circle at 100% 0, transparent 21.500px, #fff 22px); }
.tabs { display: flex; }
.tabs i { width: 78px; height: 32px; padding-left: 20px; border-right: 4px solid #fff; display: block; font-style: normal; }
.tabs.wide i { width: 80px; }
.tabs svg { width: 32px; height: 32px; }
.medium { display: block; width: 32px; height: 32px; border-radius: 5px; background: #000; color: #fff; font: 700 22px/32px "Liberation Serif", serif; padding-left: 2px; letter-spacing: -1.500px; }
.plus { margin-left: 22px; }
.tabsearch { margin-left: auto; width: 54px; height: 56px; border-radius: 20px; background: #fff; display: flex; align-items: center; justify-content: center; }

.toolbar { height: 94px; border-bottom: 2px solid #cbcbcb; display: flex; align-items: center; padding: 0 39px 0 31px; flex: none; background: #fff; }
.nav-i { margin-right: 44px; }
.nav-i:nth-child(1) { margin-right: 42px; }
.nav-i:nth-child(2) { margin-right: 45px; }
.nav-i:nth-child(4) { margin-right: 38px; }
.omnibox { width: 2756px; height: 68px; border-radius: 34px; background: #e1e1e1; display: flex; align-items: center; padding: 0 32px 0 9px; margin-right: 37px; }
.site { width: 48px; height: 48px; border-radius: 50%; background: #fff; display: flex; align-items: center; justify-content: center; }
.url { margin-left: 17px; font-size: 28px; letter-spacing: .005em; color: #202124; flex: 1; }
.e1 { margin-right: 37px; }
.e2 { margin-right: 39px; }
.e3 { margin-right: 35px; margin-top: -4px; }
.vsep { width: 4px; height: 32px; border-radius: 2px; background: #e4dbd8; margin-right: 37px; }
.e4 { margin-right: 36px; }
.e5 { margin-right: 48px; }

.page { flex: 1; display: flex; position: relative; background: #fefefe; min-height: 0; }
.page::after { content: ""; position: absolute; inset: 0; pointer-events: none;
  background: linear-gradient(0deg, rgba(0,0,0,.075), rgba(0,0,0,.02) 45px, transparent 90px), linear-gradient(270deg, rgba(0,0,0,.07), rgba(0,0,0,.02) 14px, transparent 32px);
  -webkit-mask-image: linear-gradient(90deg, transparent, #000 120px); mask-image: linear-gradient(90deg, transparent, #000 120px); }
.sidebar { width: 576px; border-right: 2px solid #e5e5e5; padding: 32px; display: flex; flex-direction: column; flex: none; }
.brand { font-size: 48px; line-height: 64px; font-weight: 700; letter-spacing: -.025em; padding-top: 1px; margin-bottom: -1px; }
.side-nav { margin-top: 64px; display: flex; flex-direction: column; gap: 16px; }
.side-nav a { height: 80px; padding: 20px 32px; font-size: 28px; line-height: 41px; font-weight: 500; letter-spacing: -.01em; }
.user { margin-top: auto; border-top: 2px solid #e5e5e5; padding-top: 33px; display: flex; flex-direction: column; }
.user-name { font-size: 32px; line-height: 48px; font-weight: 500; letter-spacing: -.024em; }
.user-role { font-size: 28px; line-height: 40px; color: #78716c; letter-spacing: -.018em; margin-bottom: 31px; }
.btn { height: 80px; padding: 0 32px; border: 0; border-radius: 12px; font: 500 28px/40px Inter, sans-serif; letter-spacing: -.012em; }
.danger { background: #dc524d; color: #fdf6f5; }
.primary { background: #113262; color: #f5f8fc; letter-spacing: -.018em; padding: 0; width: 197px; }
.outline { background: #fff; border: 2px solid #e5e5e5; color: #0b0b0b; padding: 0; width: 253px; }

.content { flex: 1; padding: 32px; min-width: 0; }
.welcome { font-size: 60px; line-height: 72px; font-weight: 700; letter-spacing: -.033em; }
.section-title { margin-top: 48px; margin-bottom: 32px; display: flex; align-items: center; gap: 16px; font-size: 48px; line-height: 64px; height: 64px; font-weight: 600; letter-spacing: -.036em; }
.section-title span { padding-top: 3px; }
.section-title svg { fill: none; stroke: #0b0b0b; stroke-width: 2; stroke-linecap: round; stroke-linejoin: round; }
.promo-title { margin-top: 64px; letter-spacing: -.029em; }
.cards { display: grid; grid-template-columns: repeat(3, 1fr); gap: 48px; }
.card { border: 2px solid #e5e5e5; border-radius: 16px; background: #fff; overflow: hidden; box-shadow: 0 2px 4px rgba(0,0,0,.05); }
.photo { height: 512px; display: flex; font-size: 32px; line-height: 50px; letter-spacing: -.029em; }
.body { padding: 48px; }
.head { display: flex; justify-content: space-between; line-height: 79px; font-size: 48px; font-weight: 600; }
.head h3 { font-size: 48px; font-weight: 600; letter-spacing: -.063em; }
.head strong { font-weight: 600; color: #113262; letter-spacing: -.045em; }
.head .short { letter-spacing: -.051em; }
.desc { margin-top: 32px; padding-top: 1px; font-size: 32px; line-height: 48px; color: #78716c; letter-spacing: -.022em; white-space: nowrap; }
.tags { margin-top: 31px; display: flex; flex-wrap: wrap; gap: 16px; }
.tags span { height: 56px; padding: 0 16px; border-radius: 28px; background: #f5f5f4; color: #1c1917; font-size: 28px; line-height: 57px; letter-spacing: -.014em; }
.foot { margin-top: 32px; display: flex; justify-content: space-between; align-items: center; font-size: 28px; color: #78716c; letter-spacing: -.012em; }
.promo { width: 1436px; height: 400px; border: 2px solid #e5e5e5; border-radius: 16px; background: #fff; padding: 49px 48px; }
.promo h4 { font-size: 32px; line-height: 48px; font-weight: 600; letter-spacing: -.017em; }
.promo p { margin: 16px 0 31px; font-size: 32px; line-height: 48px; color: #78716c; letter-spacing: -.025em; }

.dock { position: absolute; left: 99px; top: 2092px; width: 3387px; height: 138px; border-radius: 44px; border: 2px solid #50524f; display: flex; align-items: flex-start; gap: 28.800px; padding: 18px 0 0 17.500px;
  background: linear-gradient(90deg, #242b25 0, #212b2a 12%, #232d25 20%, #252c25 25%, #30361f 27.500%, #262723 31%, #202122 34%, #25221e 46%, #34281d 50.500%, #2e281e 53%, #29342a 58%, #29312b 68%, #2d2e2e 73%, #28332a 80%, #2b3026 84%, #4a3726 89%, #2f2a23 94%, #1e2120 98%); }
.app { width: 88px; height: 88px; position: relative; flex: none; }
.app > svg { width: 88px; height: 88px; overflow: visible; }
.run::after { content: ""; position: absolute; left: 40px; top: 108px; width: 8px; height: 8px; border-radius: 50%; background: #a9b1ab; }
.cal { border-radius: 20px; background: #f8f7f5; overflow: hidden; text-align: center; }
.cal b { display: block; height: 27px; background: #e05a4f; color: #fff; font-size: 17px; line-height: 29px; font-weight: 600; }
.cal span { display: block; font-size: 51px; line-height: 56px; color: #222; font-weight: 300; letter-spacing: -.03em; }
.badge { position: absolute; left: 60px; top: -10px; width: 42px; height: 42px; border-radius: 50%; background: #e0493c; color: #fff; font: 400 22px/42px Inter, sans-serif; text-align: center; box-shadow: 0 2px 4px rgba(0,0,0,.3); }
.tv { border-radius: 20px; background: linear-gradient(#2b3533, #0c0f12); color: #fff; display: flex; align-items: center; justify-content: center; gap: 3px; }
.app.tv > svg { width: 26px; height: 31px; fill: #fff; }
.tv span { font-size: 38px; font-weight: 500; line-height: 40px; letter-spacing: -.03em; margin-top: -2px; }
.prompt { position: absolute; left: 14px; top: 12px; display: flex; gap: 5px; align-items: center; color: #64d84c; font: 700 23px/30px "Liberation Mono", monospace; }
.prompt i { width: 4px; height: 24px; background: #3c8a35; }
.word { position: absolute; left: 8px; top: 27px; width: 33px; text-align: center; color: #fff; font-size: 24px; line-height: 33px; font-weight: 700; }
.divider { width: 24.400px; height: 102px; margin-top: -2px; background: linear-gradient(#72766f, #72766f) center / 2px 100% no-repeat; flex: none; }
.thumb { width: 102px; height: 58px; margin: 15px 0 0 -9px; position: relative; flex: none; }
.thumb > svg:first-child { width: 102px; height: 58px; }
.login-thumb { margin-left: -13px; }
.mini { position: absolute; left: 67px; top: 45px; width: 32px; height: 32px; }
.trash { margin: -8px 0 0 -3px; flex: none; }
```
